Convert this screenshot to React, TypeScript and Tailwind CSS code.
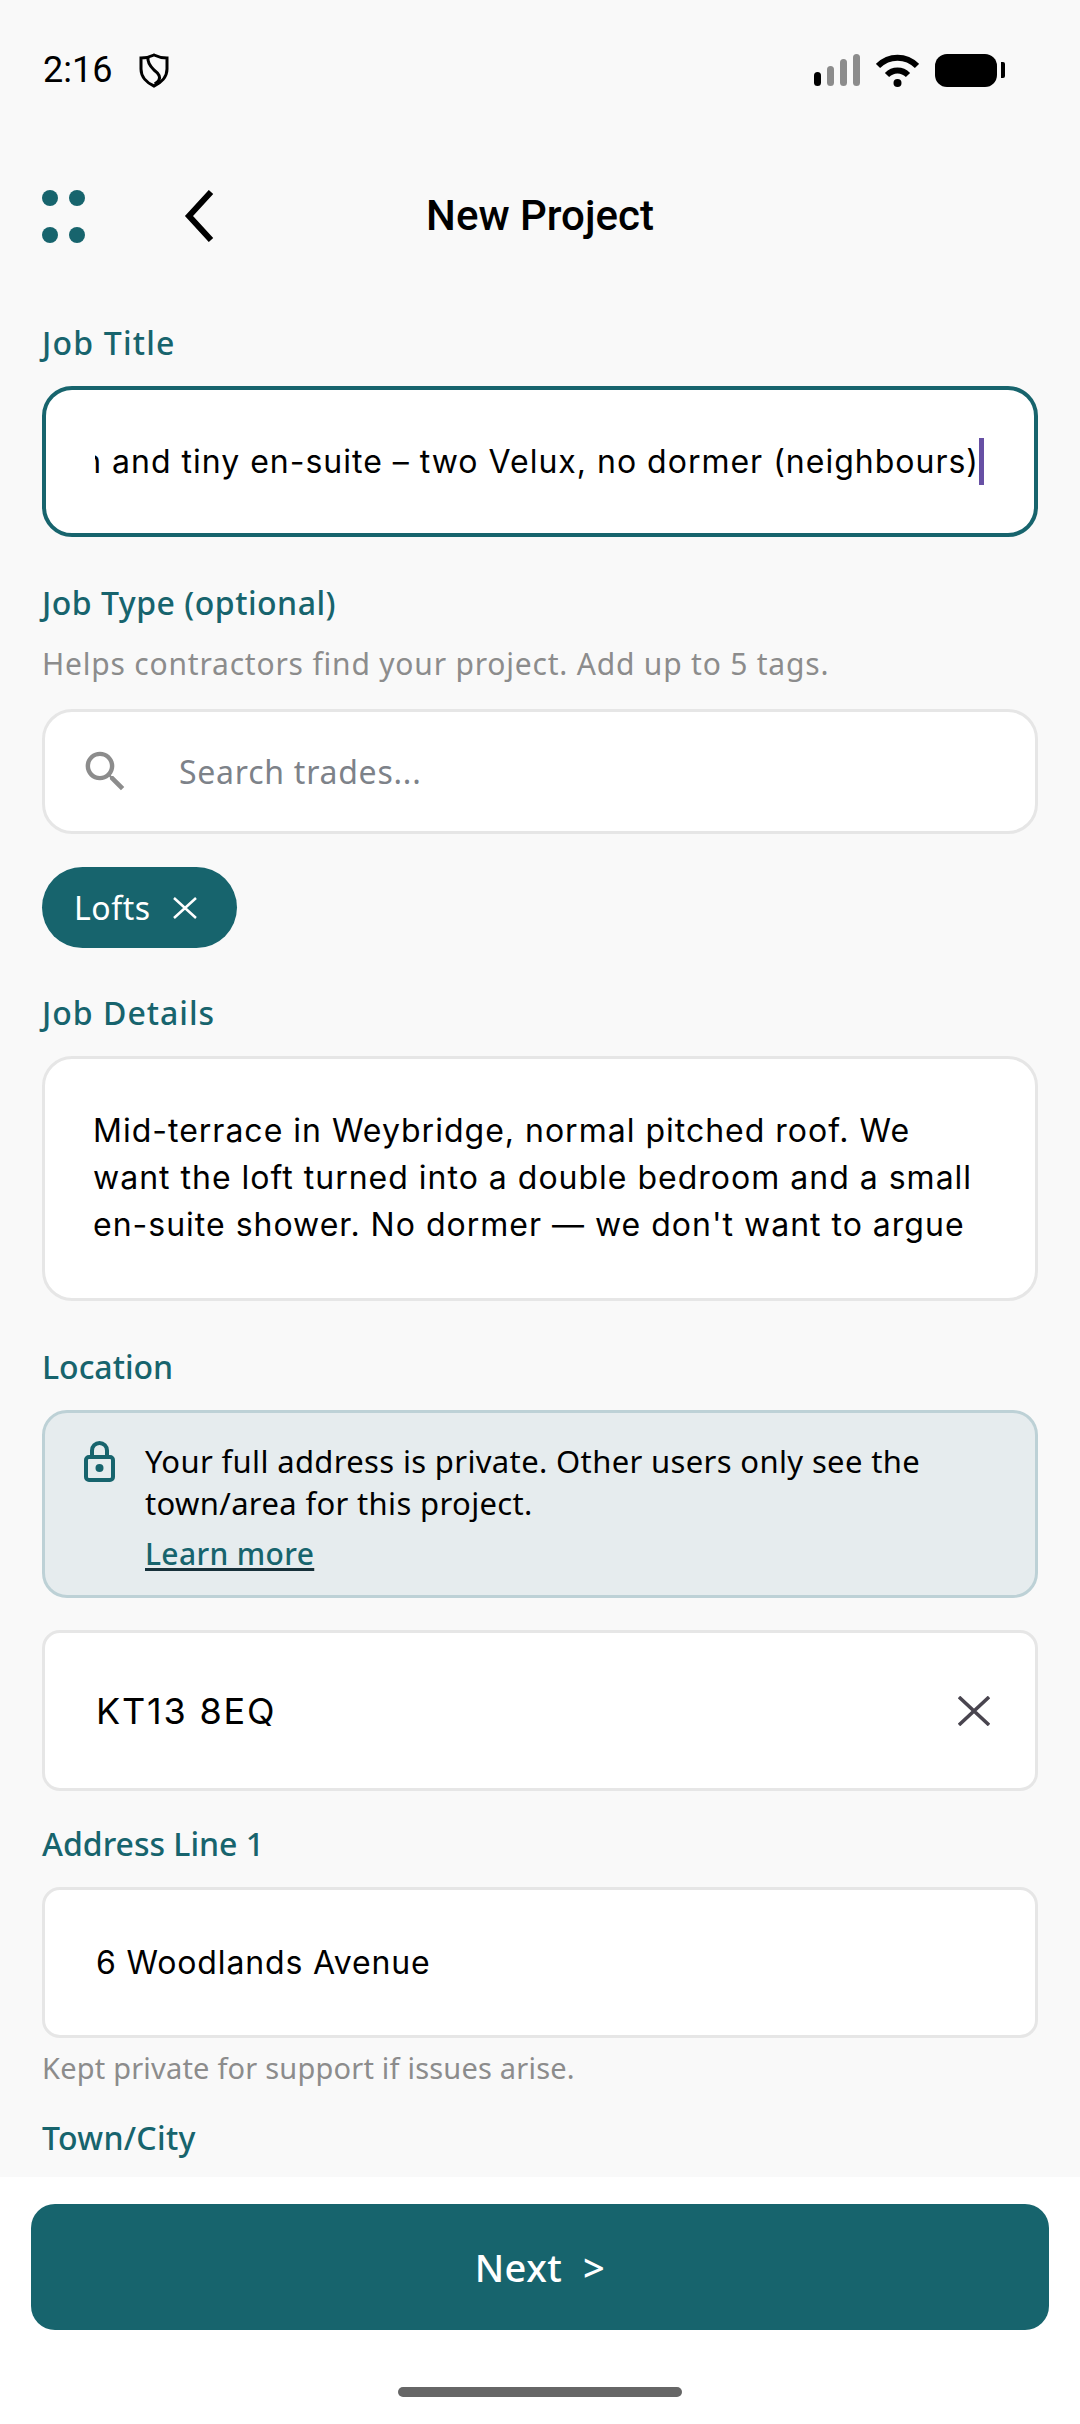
const teal = "text-[#17646d]";

function Label({ children, className = "" }: { children: React.ReactNode; className?: string }) {
  return (
    <p className={`font-[Noto_Sans,sans-serif] text-[32px] leading-[40px] font-medium ${teal} ${className}`}>
      {children}
    </p>
  );
}

function StatusBar() {
  return (
    <div className="flex h-[140px] items-center justify-between pr-[75px] pl-[43px]">
      <div className="flex items-center gap-[27px]">
        <span className="font-[Roboto,sans-serif] text-[36px] leading-none text-black">2:16</span>
        <svg width="30" height="35" viewBox="0 0 30 35" fill="none" stroke="black" strokeWidth="3">
          <path d="M15 2 C19 4 24 5 28 5 V16 C28 24 22 30 15 33 C8 30 2 24 2 16 V5 C6 5 11 4 15 2 Z" />
          <path d="M9 4 C8 10 12 14 15 17 C19 20 22 23 20 27 C19 29 17 30 16 31" />
        </svg>
      </div>
      <div className="flex items-center gap-[16px]">
        <div className="flex items-end gap-[6px]">
          <span className="h-[14px] w-[7px] rounded-full bg-black" />
          <span className="h-[20px] w-[7px] rounded-full bg-[#8c8c8c]" />
          <span className="h-[27px] w-[7px] rounded-full bg-[#8c8c8c]" />
          <span className="h-[32px] w-[7px] rounded-full bg-[#8c8c8c]" />
        </div>
        <svg width="43" height="33" viewBox="0 0 43 33" fill="none" stroke="black" strokeWidth="6">
          <path d="M2 12 C13 1 30 1 41 12" />
          <path d="M11 21 C17 15 26 15 32 21" />
          <circle cx="21.5" cy="29" r="4" fill="black" stroke="none" />
        </svg>
        <div className="flex items-center gap-[4px]">
          <span className="h-[33px] w-[62px] rounded-[12px] bg-black" />
          <span className="h-[16px] w-[4px] rounded-r-[2px] bg-black" />
        </div>
      </div>
    </div>
  );
}

function NavBar() {
  return (
    <div className="mt-[36px] grid h-[80px] grid-cols-[1fr_auto_1fr] items-center px-[42px]">
      <div className="flex items-center gap-[99px]">
        <div className="grid grid-cols-[16px_16px] gap-x-[11px] gap-y-[21px]">
          <span className="h-[16px] rounded-full bg-[#17646d]" />
          <span className="h-[16px] rounded-full bg-[#17646d]" />
          <span className="h-[16px] rounded-full bg-[#17646d]" />
          <span className="h-[16px] rounded-full bg-[#17646d]" />
        </div>
        <svg width="30" height="52" viewBox="0 0 30 52" fill="none" stroke="black" strokeWidth="6">
          <path d="M27 2 L5 26 L27 50" />
        </svg>
      </div>
      <h1 className="font-[Roboto,sans-serif] text-[42px] leading-none font-medium text-black">New Project</h1>
      <div />
    </div>
  );
}

const inter = "font-[Inter,sans-serif] text-black";
const hint = "font-[Noto_Sans,sans-serif] leading-[40px] text-[#8c8c8c]";

export default function App() {
  return (
    <div className="flex h-[2424px] w-[1080px] flex-col overflow-hidden bg-white">
      <div className="h-[2177px] shrink-0 overflow-hidden bg-[#f9f9f9]">
        <StatusBar />
        <NavBar />
        <main className="px-[42px] pt-[67px]">
          <Label className="tracking-[1.2px]">Job Title</Label>
          <div className="mt-[23px] flex h-[151px] items-center rounded-[30px] border-[4px] border-[#17646d] bg-white pr-[50px] pl-[49px]">
            <div className="flex min-w-0 flex-1 items-center justify-end overflow-hidden">
              <span className={`${inter} text-[32px] tracking-[1px] whitespace-nowrap`}>
                Loft conversion and tiny en-suite – two Velux, no dormer (neighbours)
              </span>
              <span className="h-[47px] w-[5px] shrink-0 bg-[#6750a4]" />
            </div>
          </div>

          <Label className="mt-[46px] tracking-[0.5px]">Job Type (optional)</Label>
          <p className={`mt-[21px] text-[30px] tracking-[0.8px] ${hint}`}>Helps contractors find your project. Add up to 5 tags.</p>
          <div className="mt-[25px] flex h-[125px] items-center rounded-[30px] border-[3px] border-[#e6e6e6] bg-white pl-[34px]">
            <svg width="53" height="53" viewBox="0 0 24 24" fill="#8c8c8c">
              <path d="M15.5 14h-.79l-.28-.27C15.41 12.59 16 11.11 16 9.5 16 5.91 13.09 3 9.5 3S3 5.91 3 9.5 5.91 16 9.5 16c1.61 0 3.09-.59 4.23-1.57l.27.28v.79l5 4.99L20.49 19l-4.99-5zm-6 0C7.01 14 5 11.99 5 9.5S7.01 5 9.5 5 14 7.01 14 9.5 11.99 14 9.5 14z" />
            </svg>
            <span className="ml-[47px] font-[Noto_Sans,sans-serif] text-[32px] tracking-[0.75px] text-[#7d8289]">Search trades...</span>
          </div>
          <div className="mt-[33px] flex h-[81px] w-[195px] items-center rounded-full bg-[#17646d] pl-[32px]">
            <span className="font-[Noto_Sans,sans-serif] text-[32px] tracking-[0.5px] text-white">Lofts</span>
            <svg className="ml-[22px]" width="24" height="22" viewBox="0 0 24 22" fill="none" stroke="white" strokeWidth="2.5">
              <path d="M1 1 L23 21 M23 1 L1 21" />
            </svg>
          </div>

          <Label className="mt-[45px] tracking-[1px]">Job Details</Label>
          <div className={`mt-[23px] h-[245px] rounded-[30px] border-[3px] border-[#e6e6e6] bg-white pt-[48px] pr-[40px] pl-[48px] ${inter} text-[32px] leading-[47px] tracking-[1px]`}>
            Mid-terrace in Weybridge, normal pitched roof. We want the loft turned into a double bedroom and a small en-suite shower. No dormer — we don't want to argue
          </div>

          <Label className="mt-[46px]">Location</Label>
          <div className="mt-[23px] flex h-[188px] gap-[29px] rounded-[25px] border-[3px] border-[#bdd1d6] bg-[#e6ecee] pt-[27px] pl-[39px]">
            <svg className="mt-[1px] shrink-0" width="32" height="41" viewBox="0 0 32 41" fill="none" stroke="#17646d" strokeWidth="4">
              <rect x="2" y="16" width="27" height="23" rx="3" />
              <path d="M8 16 V9.5 A7.5 7.5 0 0 1 23 9.5 V16" />
              <circle cx="15.5" cy="27" r="4" fill="#17646d" stroke="none" />
            </svg>
            <div className="font-[Noto_Sans,sans-serif] text-[31px] leading-[42px] tracking-[0.35px] text-black">
              <p>Your full address is private. Other users only see the</p>
              <p>town/area for this project.</p>
              <p className={`mt-[9px] text-[30px] font-medium ${teal} underline decoration-[#17313a] decoration-[3px] underline-offset-[3px]`}>Learn more</p>
            </div>
          </div>

          <div className="mt-[32px] flex h-[161px] items-center justify-between rounded-[18px] border-[3px] border-[#e6e6e6] bg-white pr-[45px] pl-[51px]">
            <span className={`${inter} text-[36px] tracking-[1.8px]`}>KT13 8EQ</span>
            <svg width="32" height="30" viewBox="0 0 32 30" fill="none" stroke="#49454f" strokeWidth="3.5">
              <path d="M1 1 L31 29 M31 1 L1 29" />
            </svg>
          </div>

          <Label className="mt-[33px]">Address Line 1</Label>
          <div className="mt-[23px] flex h-[151px] items-center rounded-[18px] border-[3px] border-[#e6e6e6] bg-white pl-[51px]">
            <span className={`${inter} text-[32px] tracking-[0.85px]`}>6 Woodlands Avenue</span>
          </div>
          <p className={`mt-[10px] text-[29px] tracking-[0.2px] ${hint}`}>Kept private for support if issues arise.</p>
          <Label className="mt-[30px] tracking-[0.3px]">Town/City</Label>
        </main>
      </div>

      <div className="flex flex-1 flex-col items-center bg-white px-[31px] pt-[27px]">
        <button className="flex h-[126px] w-full items-center justify-center rounded-[24px] bg-[#17646d] font-[Noto_Sans,sans-serif] text-[38px] font-medium tracking-[0.5px] text-white">
          Next&nbsp;&nbsp;&gt;
        </button>
        <div className="mt-[57px] h-[10px] w-[284px] rounded-full bg-[#666666]" />
      </div>
    </div>
  );
}
